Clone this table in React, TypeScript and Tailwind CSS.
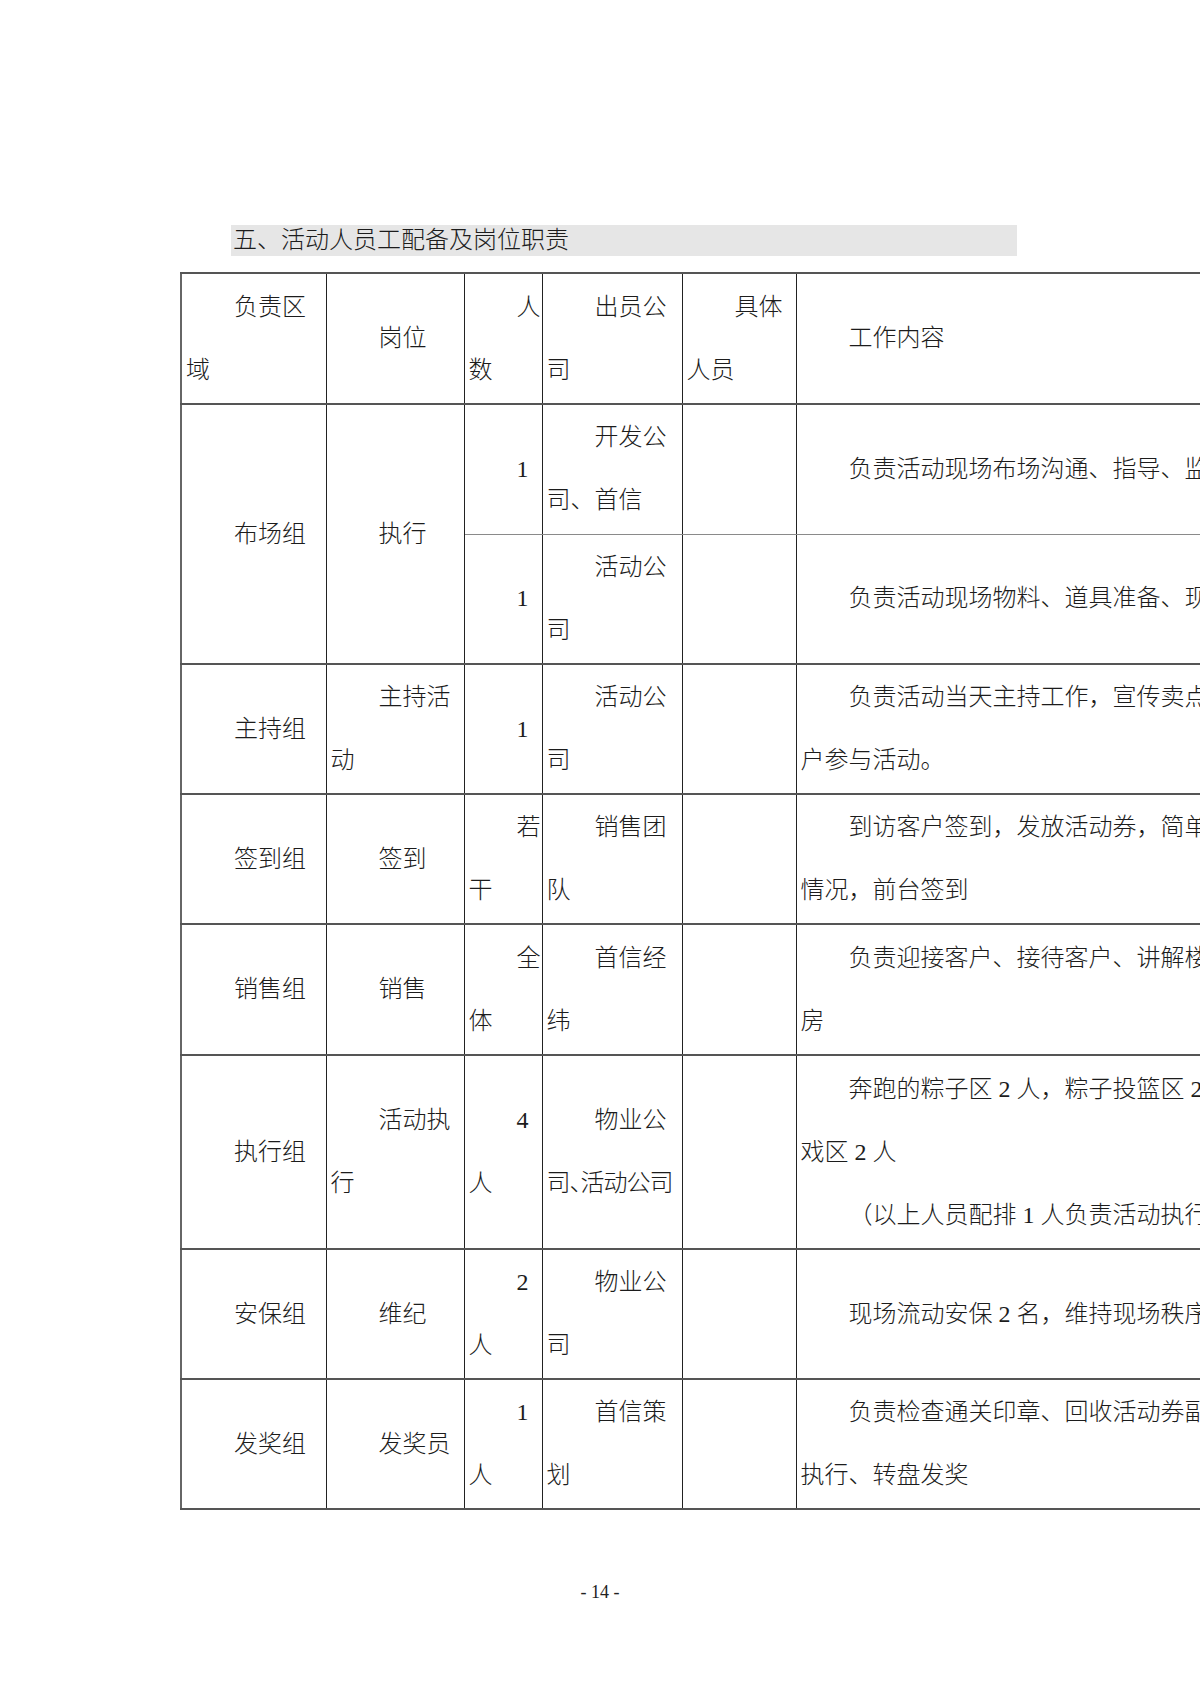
import React from 'react'

type Cell = { text: string[][]; rowSpan?: number; sub?: boolean }

// every cell: list of paragraphs, each paragraph a list of lines (first line indented 2 chars)
const c = (...paras: string[][]): Cell => ({ text: paras })

const rows: { h: string; cells: Cell[]; top?: boolean }[] = [
    {
        h: 'h-[131px]',
        cells: [c(['负责区', '域']), c(['岗位']), c(['人', '数']), c(['出员公', '司']), c(['具体', '人员']), c(['工作内容'])],
    },
    {
        h: 'h-[130px]',
        cells: [
            { text: [['布场组']], rowSpan: 2 },
            { text: [['执行']], rowSpan: 2 },
            c(['1']),
            c(['开发公', '司、首信']),
            c(),
            c(['负责活动现场布场沟通、指导、监督工作']),
        ],
    },
    {
        h: 'h-[130px]',
        top: true,
        cells: [c(['1']), c(['活动公', '司']), c(), c(['负责活动现场物料、道具准备、现场布置'])],
    },
    {
        h: 'h-[130px]',
        cells: [c(['主持组']), c(['主持活', '动']), c(['1']), c(['活动公', '司']), c(), c(['负责活动当天主持工作，宣传卖点，引导客', '户参与活动。'])],
    },
    {
        h: 'h-[130px]',
        cells: [c(['签到组']), c(['签到']), c(['若', '干']), c(['销售团', '队']), c(), c(['到访客户签到，发放活动券，简单登记客户', '情况，前台签到'])],
    },
    {
        h: 'h-[131px]',
        cells: [c(['销售组']), c(['销售']), c(['全', '体']), c(['首信经', '纬']), c(), c(['负责迎接客户、接待客户、讲解楼盘及样板', '房'])],
    },
    {
        h: 'h-[194px]',
        cells: [
            c(['执行组']),
            c(['活动执', '行']),
            c(['4', '人']),
            c(['物业公', '司、活动公司']),
            c(),
            c(['奔跑的粽子区 2 人，粽子投篮区 2 人，亲子游', '戏区 2 人'], ['（以上人员配排 1 人负责活动执行）']),
        ],
    },
    {
        h: 'h-[130px]',
        cells: [c(['安保组']), c(['维纪']), c(['2', '人']), c(['物业公', '司']), c(), c(['现场流动安保 2 名，维持现场秩序'])],
    },
    {
        h: 'h-[130px]',
        cells: [c(['发奖组']), c(['发奖员']), c(['1', '人']), c(['首信策', '划']), c(), c(['负责检查通关印章、回收活动券副券，配合', '执行、转盘发奖'])],
    },
]

function CellText({ cell }: { cell: Cell }) {
    return (
        <>
            {cell.text.map((para, i) => (
                <div key={i}>
                    {para.map((line, j) => (
                        <div
                            key={j}
                            className={
                                'whitespace-nowrap leading-[63px] ' +
                                (j === 0 ? 'indent-12 ' : '') +
                                (line.includes('、活动公司') ? "[font-feature-settings:'halt'] tracking-[-1px]" : '')
                            }
                        >
                            {line}
                        </div>
                    ))}
                </div>
            ))}
        </>
    )
}

export default function App() {
    return (
        <div className="w-[1200px] h-[1700px] overflow-hidden bg-white text-[#1c1c1c] font-['Liberation_Serif','Noto_Sans_CJK_SC',serif] font-light">
            <div className="pt-[225px] pl-[231px]">
                <div className="w-[786px] h-[31px] bg-[#e6e6e6] pl-[2px] text-[24px] leading-[31px]">
                    五、活动人员工配备及岗位职责
                </div>
            </div>

            <table className="ml-[180px] mt-[16px] table-fixed border-collapse w-[1145px] text-[24px] border-l-2 border-l-[#666] border-t-2 border-t-[#555]">
                <colgroup>
                    <col className="w-[145px]" />
                    <col className="w-[138px]" />
                    <col className="w-[78px]" />
                    <col className="w-[140px]" />
                    <col className="w-[114px]" />
                    <col className="w-[530px]" />
                </colgroup>
                <tbody>
                    {rows.map((row, r) => (
                        <tr key={r} className={row.h}>
                            {row.cells.map((cell, k) => (
                                <td
                                    key={k}
                                    rowSpan={cell.rowSpan}
                                    className={
                                        'align-middle px-1 py-0 border-r border-r-[#222] ' +
                                        (r === 1 && !cell.rowSpan
                                            ? 'border-b border-b-[#8a8a8a]'
                                            : 'border-b-2 border-b-[#555]')
                                    }
                                >
                                    <CellText cell={cell} />
                                </td>
                            ))}
                        </tr>
                    ))}
                </tbody>
            </table>

            <div className="mt-[70px] text-center text-[18px] leading-[24px] font-['Liberation_Serif',serif] font-normal text-[#222]">
                - 14 -
            </div>
        </div>
    )
}
